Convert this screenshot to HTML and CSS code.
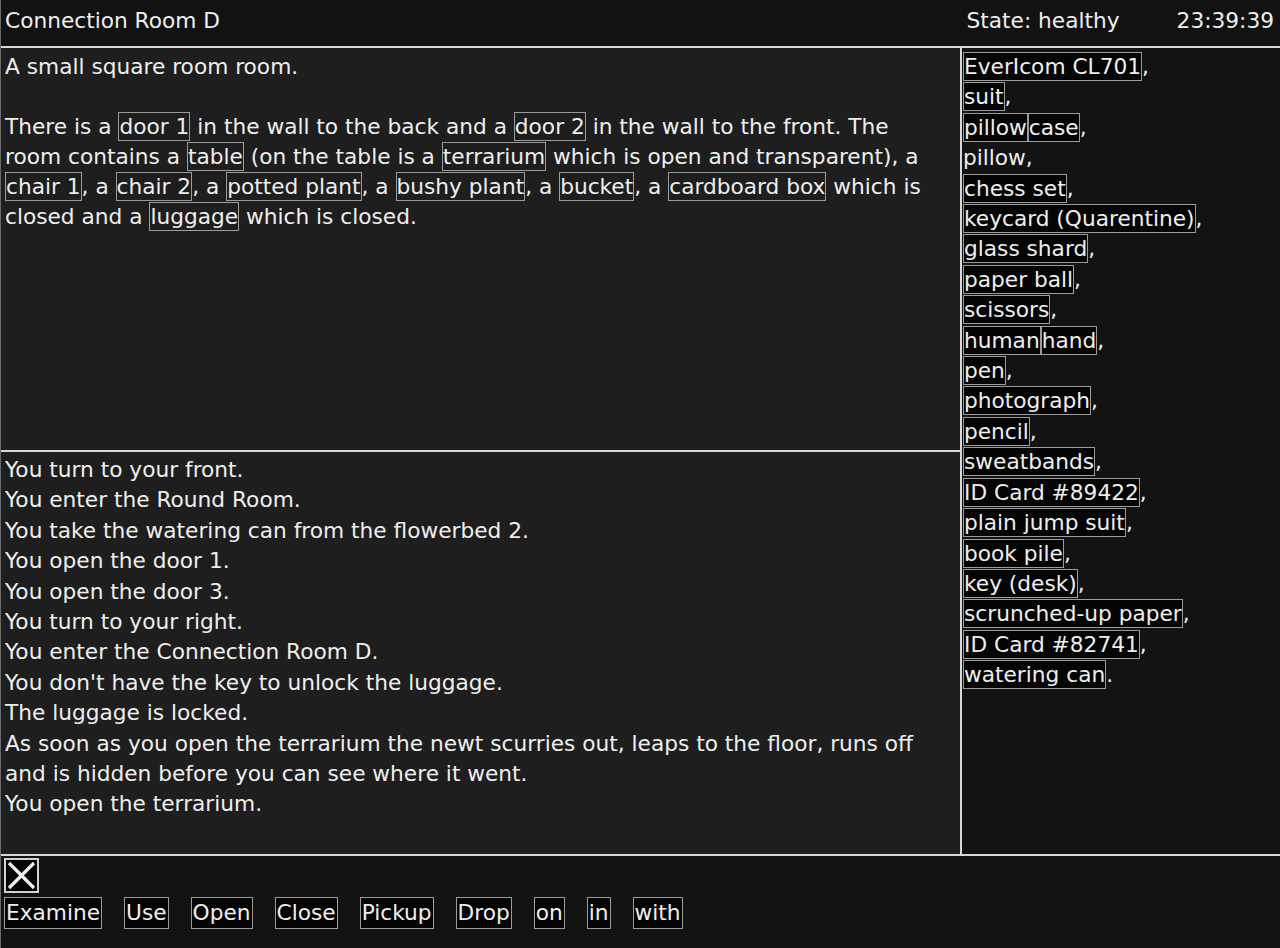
FILE: index.html
```html
<!DOCTYPE html>
<html>
<head>
<meta charset="utf-8">
<title>Connection Room D</title>
<link rel="stylesheet" href="styles.css">
</head>
<body>
<div class="app">
  <header class="topbar">
    <div class="room-name">Connection Room D</div>
    <div class="status">
      <span class="state">State: healthy</span>
      <span class="clock">23:39:39</span>
    </div>
  </header>
  <main class="main">
    <div class="left">
      <section class="desc">
        <p>A small square room room.</p>
        <p>There is a <span class="obj">door 1</span> in the wall to the back and a <span class="obj">door 2</span> in the wall to the front. The room contains a <span class="obj">table</span> (on the table is a <span class="obj">terrarium</span> which is open and transparent), a <span class="obj">chair 1</span>, a <span class="obj">chair 2</span>, a <span class="obj">potted plant</span>, a <span class="obj">bushy plant</span>, a <span class="obj">bucket</span>, a <span class="obj">cardboard box</span> which is closed and a <span class="obj">luggage</span> which is closed.</p>
      </section>
      <section class="log">
        <div>You turn to your front.</div>
        <div>You enter the Round Room.</div>
        <div>You take the watering can from the flowerbed 2.</div>
        <div>You open the door 1.</div>
        <div>You open the door 3.</div>
        <div>You turn to your right.</div>
        <div>You enter the Connection Room D.</div>
        <div>You don't have the key to unlock the luggage.</div>
        <div>The luggage is locked.</div>
        <div>As soon as you open the terrarium the newt scurries out, leaps to the floor, runs off and is hidden before you can see where it went.</div>
        <div>You open the terrarium.</div>
      </section>
    </div>
    <aside class="inventory">
      <div><span class="item">EverIcom CL701</span>,</div>
      <div><span class="item">suit</span>,</div>
      <div><span class="item">pillow</span><span class="item">case</span>,</div>
      <div>pillow,</div>
      <div><span class="item">chess set</span>,</div>
      <div><span class="item">keycard (Quarentine)</span>,</div>
      <div><span class="item">glass shard</span>,</div>
      <div><span class="item">paper ball</span>,</div>
      <div><span class="item">scissors</span>,</div>
      <div><span class="item">human</span><span class="item">hand</span>,</div>
      <div><span class="item">pen</span>,</div>
      <div><span class="item">photograph</span>,</div>
      <div><span class="item">pencil</span>,</div>
      <div><span class="item">sweatbands</span>,</div>
      <div><span class="item">ID Card #89422</span>,</div>
      <div><span class="item">plain jump suit</span>,</div>
      <div><span class="item">book pile</span>,</div>
      <div><span class="item">key (desk)</span>,</div>
      <div><span class="item">scrunched-up paper</span>,</div>
      <div><span class="item">ID Card #82741</span>,</div>
      <div><span class="item">watering can</span>.</div>
    </aside>
  </main>
  <footer class="actions">
    <div class="cancel">
      <svg width="31" height="31" viewBox="0 0 31 31"><path d="M3 3 L28 28 M28 3 L3 28" stroke="#f0f0f0" stroke-width="3.2" fill="none"/></svg>
    </div>
    <div class="verbs">
      <span class="verb">Examine</span>
      <span class="verb">Use</span>
      <span class="verb">Open</span>
      <span class="verb">Close</span>
      <span class="verb">Pickup</span>
      <span class="verb">Drop</span>
      <span class="verb">on</span>
      <span class="verb">in</span>
      <span class="verb">with</span>
    </div>
  </footer>
</div>
</body>
</html>
```
FILE: styles.css
```css
* { box-sizing: border-box; }
html, body { margin: 0; padding: 0; background: #0d0d0d; }
body {
  font-family: "DejaVu Sans", "Liberation Sans", sans-serif;
  font-size: 21.7px;
  color: #eeeeee;
}
.app {
  width: 1280px;
  height: 948px;
  display: flex;
  flex-direction: column;
  border-left: 1px solid #6a6a6a;
  background: #141414;
}
.topbar {
  height: 48px;
  flex: none;
  display: flex;
  justify-content: space-between;
  align-items: flex-start;
  padding: 6px 6px 0 4px;
  line-height: 30px;
  background: #121212;
  border-bottom: 2px solid #d8d8d8;
}
.status { display: flex; gap: 57px; }
.main {
  flex: none;
  height: 808px;
  display: flex;
  border-bottom: 2px solid #d8d8d8;
}
.left {
  width: 961px;
  flex: none;
  display: flex;
  flex-direction: column;
  border-right: 2px solid #d8d8d8;
  background: #1e1e1e;
}
.desc {
  height: 404px;
  flex: none;
  padding: 4px 28px 0 4px;
  line-height: 30px;
  border-bottom: 2px solid #d8d8d8;
}
.desc p { margin: 0 0 30px 0; }
.obj {
  border: 1px solid #9c9c9c;
  padding: 1px 0;
}
.log {
  flex: 1;
  padding: 3px 30px 0 4px;
  line-height: 30.4px;
}
.inventory {
  flex: 1;
  padding: 4px 0 0 1px;
  line-height: 30.4px;
  background: #131313;
}
.item {
  border: 1px solid #9c9c9c;
  background: #050505;
  padding: 1px 0;
}
.actions {
  flex: 1;
  padding: 2px 0 0 3px;
  background: #131313;
}
.cancel {
  width: 35px;
  height: 35px;
  border: 2px solid #d0d0d0;
  background: #050505;
  display: flex;
  align-items: center;
  justify-content: center;
}
.verbs {
  margin-top: 4px;
  display: flex;
  gap: 22px;
}
.verb {
  border: 1px solid #9c9c9c;
  background: #050505;
  padding: 0 1px;
  line-height: 30px;
}
```
